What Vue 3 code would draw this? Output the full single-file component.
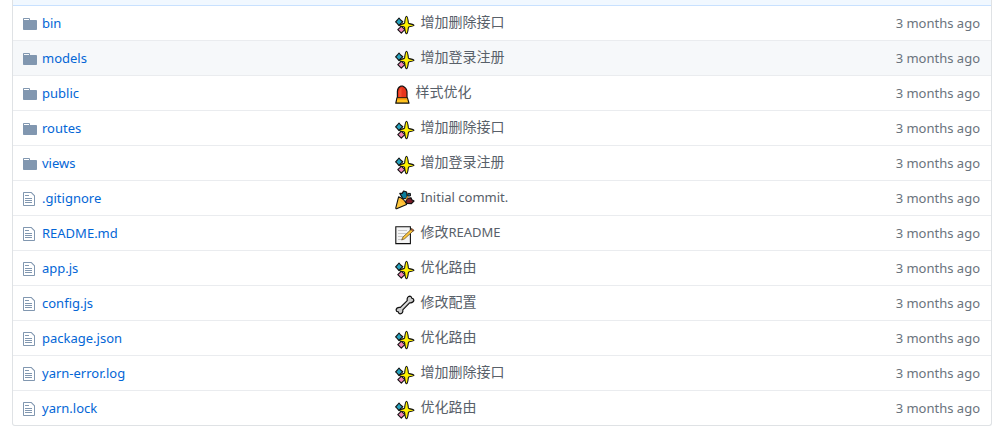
<script setup>
const files = [
  { name: 'bin', type: 'folder', icon: 'sparkles', cjk: '增加删除接口' },
  { name: 'models', type: 'folder', icon: 'sparkles', cjk: '增加登录注册', active: true },
  { name: 'public', type: 'folder', icon: 'light', cjk: '样式优化' },
  { name: 'routes', type: 'folder', icon: 'sparkles', cjk: '增加删除接口' },
  { name: 'views', type: 'folder', icon: 'sparkles', cjk: '增加登录注册' },
  { name: '.gitignore', type: 'file', icon: 'tada', latin: 'Initial commit.' },
  { name: 'README.md', type: 'file', icon: 'memo', cjk: '修改', latin: 'README' },
  { name: 'app.js', type: 'file', icon: 'sparkles', cjk: '优化路由' },
  { name: 'config.js', type: 'file', icon: 'wrench', cjk: '修改配置' },
  { name: 'package.json', type: 'file', icon: 'sparkles', cjk: '优化路由' },
  { name: 'yarn-error.log', type: 'file', icon: 'sparkles', cjk: '增加删除接口' },
  { name: 'yarn.lock', type: 'file', icon: 'sparkles', cjk: '优化路由' },
]
</script>

<template>
  <main class="page">
    <div class="box">
      <div class="commit-bar"></div>
      <table class="files">
        <tbody>
          <tr v-for="f in files" :key="f.name" :class="{ active: f.active }">
            <td class="name">
              <div class="cell">
                <span class="kind">
                  <svg v-if="f.type === 'folder'" width="14" height="16" viewBox="0 0 14 16" aria-hidden="true">
                    <path d="M13 4H7V3c0-.66-.31-1-1-1H1c-.55 0-1 .45-1 1v10c0 .55.45 1 1 1h12c.55 0 1-.45 1-1V5c0-.55-.45-1-1-1zM6 4H1V3h5v1z" />
                  </svg>
                  <svg v-else width="12" height="16" viewBox="0 0 12 16" aria-hidden="true">
                    <path d="M6 5H2V4h4v1zM2 8h7V7H2v1zm0 2h7V9H2v1zm0 2h7v-1H2v1zm10-7.5V14c0 .55-.45 1-1 1H1c-.55 0-1-.45-1-1V2c0-.55.45-1 1-1h7.5L12 4.5zM11 5L8 2H1v12h10V5z" />
                  </svg>
                </span>
                <a href="#">{{ f.name }}</a>
              </div>
            </td>
            <td class="message">
              <div class="cell">
                <svg v-if="f.icon === 'sparkles'" class="emoji" width="20" height="20" viewBox="0 0 20 20" aria-hidden="true">
                  <path d="M4 3 5.6 5 7.8 6.8 5.6 8.6 4 10.6 2.4 8.6.6 6.8 2.4 5Z" fill="#27a3c0" stroke="#111" stroke-width="1.1" stroke-linejoin="round" />
                  <path d="M6.3 11 8 12.8 10 14.6 8 16.4 6.3 18.2 4.6 16.4 2.8 14.6 4.6 12.8Z" fill="#f285b4" stroke="#111" stroke-width="1.1" stroke-linejoin="round" />
                  <path d="M11.5 1.2Q12.6 1.2 13.4 7.9 13.6 8.5 14.2 8.6 19 9.6 19 10.3 19 11 14.2 11.8 13.6 12 13.4 12.6 12.6 18.8 11.5 18.8 10.4 18.8 9.6 12.6 9.4 12 8.8 11.8 4.4 11 4.4 10.3 4.4 9.6 8.8 8.6 9.4 8.5 9.6 7.9 10.4 1.2 11.5 1.2Z" fill="#fff100" stroke="#111" stroke-width="1.1" stroke-linejoin="round" />
                </svg>
                <svg v-else-if="f.icon === 'light'" class="emoji" width="15" height="20" viewBox="0 0 15 20" aria-hidden="true">
                  <path d="M2.4 14V6.2Q2.7 2.4 5.6 1.2H8Q11.4 2.6 12 6.5V14Z" fill="#e8351c" stroke="#111" stroke-width="1.2" />
                  <path d="M4 12V6.5Q4.5 3.5 6.5 2.7V12Z" fill="#f4502f" />
                  <path d="M2 12.8H12.4L14 18.2H.8Z" fill="#ffc21f" stroke="#111" stroke-width="1.2" stroke-linejoin="round" />
                  <path d="M2.5 13.3H12L12.4 14.8H2.1Z" fill="#ff9a0c" />
                </svg>
                <svg v-else-if="f.icon === 'tada'" class="emoji" width="20" height="20" viewBox="0 0 20 20" aria-hidden="true">
                  <path d="M8 9 4.8 3.4 7.2 3.4 8.6 1 11.6 2 12.4 8Z" fill="#087d9c" stroke="#111" stroke-width="1.2" stroke-linejoin="round" />
                  <path d="M10.5 12 12.2 8.4 16 7.8 16.8 9.8 19 11 16.4 13.7 11.8 13.5Z" fill="#7a1c28" stroke="#111" stroke-width="1.2" stroke-linejoin="round" />
                  <path d="M3.6 6.8Q9 8.7 11.6 14.4L1.6 18.8Q.7 18.8.8 17.9Z" fill="#ffc83d" stroke="#111" stroke-width="1.1" stroke-linejoin="round" />
                  <path d="M4 7.8Q8.5 9.5 10.8 14 8 13.8 5.8 11.4 4.4 9.7 4 7.8Z" fill="#ffb52f" />
                  <path d="M11 9.5 13 6.2" stroke="#d78b24" stroke-width="1.4" />
                  <path d="M12.8 3.4h2.6v2.6h-2.6z" fill="#167896" stroke="#111" />
                </svg>
                <svg v-else-if="f.icon === 'memo'" class="emoji" width="20" height="20" viewBox="0 0 20 20" aria-hidden="true">
                  <path d="M.8 1.8H15.4V18.6H.8Z" fill="#f5f5f5" stroke="#111" stroke-width="1.1" />
                  <path d="M3 5.5H12M3 8.5H11M3 11.5H8M3 14.5H6" fill="none" stroke="#c8c8c8" />
                  <path d="M6.6 15 8 12 17 3.6 18.8 5.4 9.6 13.8Z" fill="#ffc83d" stroke="#54401c" stroke-width=".7" stroke-linejoin="round" />
                  <path d="M16 4.5 17 3.6 18.8 5.4 17.8 6.3Z" fill="#e87959" stroke="#111" stroke-width=".6" />
                </svg>
                <svg v-else class="emoji" width="20" height="20" viewBox="0 0 20 20" aria-hidden="true">
                  <path d="M12.2 5.6Q11.6 1.6 15 1.2 16.4 1.2 16.7 3.2 18.9 3.6 18.9 5.2 18.4 8.2 14.6 7.8L7.8 14.8Q8.4 18.4 5 18.8 3.6 18.8 3.3 16.9 1.1 16.5 1.1 14.9 1.6 11.9 5.4 12.4Z" fill="#ccc" stroke="#111" stroke-width="1.2" stroke-linejoin="round" />
                  <path d="M6.5 13.3 13.7 6.2" stroke="#e4e4e4" />
                </svg>
                <a href="#" class="subject"><span v-if="f.cjk">{{ f.cjk }}</span><span v-if="f.latin" class="latin">{{ f.latin }}</span></a>
              </div>
            </td>
            <td class="age">3 months ago</td>
          </tr>
        </tbody>
      </table>
    </div>
  </main>
</template>

<style>
body {
  margin: 0;
  background: #fff;
}
</style>

<style scoped>
.page {
  padding: 0 11px 6px 12px;
  font: 13px/20px "Noto Sans", "Noto Sans CJK SC", sans-serif;
  color: #6a737d;
}
.box {
  border: 1px solid #dfe2e5;
  border-top: 0;
  border-radius: 0 0 3px 3px;
  overflow: hidden;
}
.commit-bar {
  height: 5px;
  background: #f1f8ff;
}
.files {
  width: 100%;
  table-layout: fixed;
  border-spacing: 0;
}
td {
  height: 34px;
  padding: 0;
  border-top: 1px solid #eaecef;
}
tr:first-child td {
  border-top-color: #c8e1ff;
}
.active td {
  background: #f6f8fa;
}
.name {
  width: 39%;
}
.cell {
  display: flex;
  align-items: center;
}
.name .cell {
  padding-left: 10px;
}
.message .cell {
  align-items: flex-start;
  height: 24px;
  padding-left: 1px;
}
.kind {
  display: flex;
  width: 19px;
  padding-top: 2px;
}
.kind svg {
  fill: #8197b0;
}
a {
  color: #0366d6;
  text-decoration: none;
}
.emoji {
  margin: 4px 5px 0 0;
}
.subject {
  color: #586069;
  font-family: "Noto Sans CJK SC", sans-serif;
  font-size: 14px;
}
.latin {
  font-family: "Noto Sans", sans-serif;
  font-size: 13px;
}
.age {
  width: 130px;
  padding-right: 11px;
  text-align: right;
}
</style>
